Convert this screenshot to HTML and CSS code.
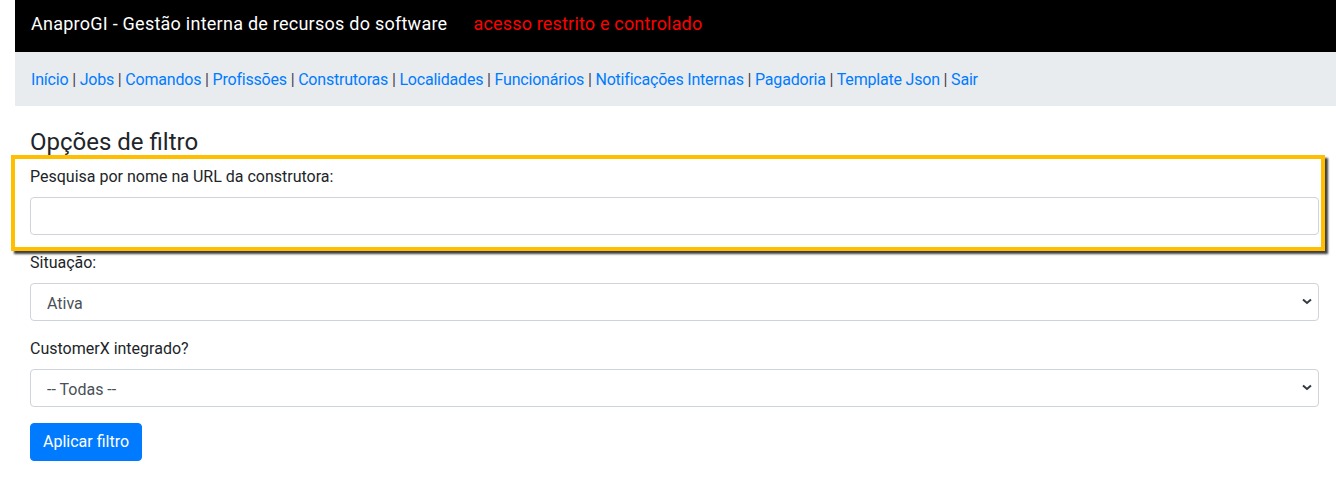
FILE: index.html
```html
<!DOCTYPE html>
<html lang="pt-BR">
<head>
<meta charset="utf-8">
<title>AnaproGI</title>
<link rel="stylesheet" href="styles.css">
</head>
<body>
<div class="page">
  <header class="topbar">
    <span class="brand">AnaproGI - Gestão interna de recursos do software</span>
    <span class="warning">acesso restrito e controlado</span>
  </header>
  <nav class="menu">
    <a href="#">Início</a> <span class="sep">|</span>
    <a href="#">Jobs</a> <span class="sep">|</span>
    <a href="#">Comandos</a> <span class="sep">|</span>
    <a href="#">Profissões</a> <span class="sep">|</span>
    <a href="#">Construtoras</a> <span class="sep">|</span>
    <a href="#">Localidades</a> <span class="sep">|</span>
    <a href="#">Funcionários</a> <span class="sep">|</span>
    <a href="#">Notificações Internas</a> <span class="sep">|</span>
    <a href="#">Pagadoria</a> <span class="sep">|</span>
    <a href="#">Template Json</a> <span class="sep">|</span>
    <a href="#">Sair</a>
  </nav>
  <main class="content">
    <h4 class="title">Opções de filtro</h4>
    <form class="filter">
      <div class="group">
        <label class="label" for="url">Pesquisa por nome na URL da construtora:</label>
        <input class="control" id="url" type="text">
        <div class="highlight"></div>
      </div>
      <div class="group">
        <label class="label" for="sit">Situação:</label>
        <select class="control select" id="sit">
          <option>Ativa</option>
          <option>Inativa</option>
        </select>
      </div>
      <div class="group">
        <label class="label" for="cx">CustomerX integrado?</label>
        <select class="control select" id="cx">
          <option>-- Todas --</option>
          <option>Sim</option>
          <option>Não</option>
        </select>
      </div>
      <button class="btn" type="button">Aplicar filtro</button>
    </form>
  </main>
</div>
</body>
</html>
```
FILE: styles.css
```css
* { box-sizing: border-box; }
html, body { margin: 0; padding: 0; background: #fff; }
body {
  font-family: Roboto, "Noto Sans", sans-serif;
  font-size: 16px;
  line-height: 1.5;
  color: #212529;
}
.page { padding-left: 15px; }
.topbar {
  background: #000;
  height: 52px;
  display: flex;
  align-items: center;
  padding: 0 0 6px 16px;
  font-size: 18px;
}
.brand { color: #fff; letter-spacing: 0.25px; }
.warning { color: #ff0000; margin-left: 26px; letter-spacing: 0.18px; }
.menu {
  background: #e9ecef;
  height: 54px;
  line-height: 56px;
  padding-left: 16px;
  white-space: nowrap;
  overflow: hidden;
  letter-spacing: -0.2px;
}
.menu a { color: #007bff; text-decoration: none; }
.sep { color: #4a3d4f; }
.content { padding: 22px 17px 20px 15px; }
.title {
  margin: 0 0 8px;
  font-size: 24px;
  font-weight: 400;
  line-height: 1.2;
}
.group { margin-bottom: 16px; position: relative; }
.label { display: block; margin-bottom: 8px; }
.control {
  display: block;
  width: 100%;
  height: 38px;
  padding: 6px 12px;
  font: inherit;
  color: #495057;
  background: #fff;
  border: 1px solid #ced4da;
  border-radius: 4px;
}
.select {
  -webkit-appearance: none;
  appearance: none;
  padding: 8px 16px 4px;
  background: #fff url("data:image/svg+xml,%3Csvg xmlns='http://www.w3.org/2000/svg' width='10' height='7' viewBox='0 0 10 7'%3E%3Cpath d='M1 1.5 L5 5 L9 1.5' fill='none' stroke='%23343a40' stroke-width='2'/%3E%3C/svg%3E") no-repeat right 6px center;
}
.highlight {
  position: absolute;
  left: -19px;
  top: -10px;
  right: -6px;
  bottom: -16px;
  border: 4px solid #ffbf00;
  box-shadow: 3px 3px 2px rgba(0, 0, 0, 0.75);
  pointer-events: none;
}
.btn {
  font: inherit;
  color: #fff;
  background: #007bff;
  border: 1px solid #007bff;
  border-radius: 4px;
  height: 38px;
  padding: 6px 12px;
  line-height: 1.5;
}
```
